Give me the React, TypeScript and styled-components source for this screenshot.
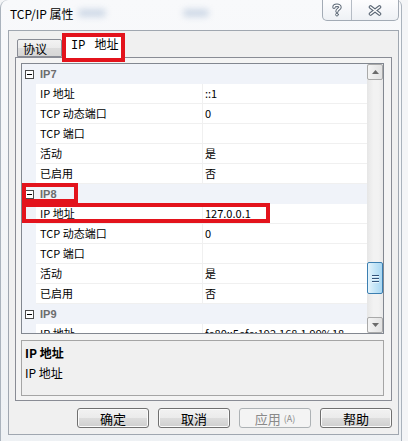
import React from 'react'
import styled, { createGlobalStyle } from 'styled-components'

const GlobalStyle = createGlobalStyle`
  html, body {
    margin: 0;
    padding: 0;
    background: #f4f5f7;
    overflow: hidden;
  }
  body {
    font-family: "Noto Sans CJK SC", "Liberation Sans", sans-serif;
    font-size: 12px;
    color: #000000;
  }
`

const CJK = `"Noto Sans CJK SC", "Liberation Sans", sans-serif`

const Frame = styled.div`
  width: 402px;
  height: 441px;
  box-sizing: border-box;
  display: flex;
  flex-direction: column;
  padding: 0 2px 6px 7px;
  background: linear-gradient(#f8f9fb, #eef1f4);
  border-left: 1px solid #aab3bd;
  border-right: 1px solid #aab3bd;
  border-top-left-radius: 8px;
  border-top-right-radius: 6px;
`

const TitleBar = styled.div`
  height: 30px;
  flex: none;
  display: flex;
  align-items: flex-start;
`

const Title = styled.div`
  padding: 6px 0 0 2px;
  line-height: 16px;
  font-size: 12px;
  font-family: ${CJK};
`

const Blur = styled.span<{ $gap: number; $w: number }>`
  margin: 9px 0 0 ${(p) => p.$gap}px;
  width: ${(p) => p.$w}px;
  height: 8px;
  border-radius: 4px;
  background: #9db3cf;
  opacity: 0.45;
  filter: blur(3px);
`

const Caption = styled.div`
  margin-left: auto;
  display: flex;
  height: 20px;
  border: 1px solid #a3abb5;
  border-top: none;
  border-radius: 0 0 5px 5px;
  background: linear-gradient(#fdfdfe, #eef1f5);
  overflow: hidden;
`

const CaptionBtn = styled.div<{ $w: number }>`
  width: ${(p) => p.$w}px;
  display: flex;
  align-items: center;
  justify-content: center;
  & + & {
    border-left: 1px solid #b5bcc5;
  }
`

const Client = styled.div`
  flex: 1;
  display: flex;
  flex-direction: column;
  width: 391px;
  box-sizing: border-box;
  padding: 4px 6px 5px 6px;
  background: #f0f0f0;
  border: 1px solid #a0a7b0;
`

const TabRow = styled.div`
  height: 22px;
  display: flex;
  align-items: flex-end;
  padding-left: 2px;
`

const Tab = styled.div<{ $active?: boolean; $w: number }>`
  position: relative;
  box-sizing: border-box;
  width: ${(p) => p.$w}px;
  height: ${(p) => (p.$active ? 23 : 18)}px;
  margin-bottom: ${(p) => (p.$active ? -1 : 0)}px;
  z-index: ${(p) => (p.$active ? 1 : 0)};
  padding-left: ${(p) => (p.$active ? 8 : 5)}px;
  border: 1px solid #898c95;
  border-bottom: ${(p) => (p.$active ? 'none' : '1px solid #898c95')};
  border-radius: 2px 2px 0 0;
  background: ${(p) =>
    p.$active ? '#ffffff' : 'linear-gradient(#f3f3f3, #ebebeb 50%, #dddddd 51%, #d6d6d6)'};
  font-size: 12px;
  line-height: ${(p) => (p.$active ? 20 : 17)}px;
  font-family: ${(p) => (p.$active ? `"Liberation Mono", ${CJK}` : CJK)};
  word-spacing: ${(p) => (p.$active ? 2 : 0)}px;
`

const Mark = styled.div<{ $t: number; $l: number; $w: number; $h: number }>`
  position: absolute;
  top: ${(p) => p.$t}px;
  left: ${(p) => p.$l}px;
  width: ${(p) => p.$w}px;
  height: ${(p) => p.$h}px;
  box-sizing: border-box;
  border: 4px solid #e3131c;
  pointer-events: none;
  z-index: 3;
`

const TabPage = styled.div`
  height: 344px;
  box-sizing: border-box;
  display: flex;
  flex-direction: column;
  padding: 5px 7px 4px 5px;
  border: 1px solid #898c95;
  background: #f4f4f4;
`

const Grid = styled.div`
  height: 271px;
  flex: none;
  box-sizing: border-box;
  display: flex;
  border: 1px solid #828790;
  background: #ffffff;
`

const Rows = styled.div`
  flex: 1;
  overflow: hidden;
`

const CatRow = styled.div`
  position: relative;
  height: 20px;
  display: flex;
  align-items: center;
  padding-left: 3px;
  background: #f0f3f9;
`

const Minus = styled.span`
  position: relative;
  width: 9px;
  height: 9px;
  box-sizing: border-box;
  border: 1px solid #4b4b4b;
  background: #ffffff;
  &::after {
    content: '';
    position: absolute;
    left: 1px;
    right: 1px;
    top: 3px;
    height: 1px;
    background: #000000;
  }
`

const CatLabel = styled.span`
  margin-left: 6px;
  font-family: "Liberation Sans", sans-serif;
  font-weight: bold;
  font-size: 11px;
  color: #6d6d6d;
`

const PropRow = styled.div`
  position: relative;
  height: 20px;
  display: flex;
`

const Gutter = styled.div`
  width: 14px;
  flex: none;
  background: #f0f3f9;
`

const Cell = styled.div<{ $w?: number }>`
  ${(p) => (p.$w ? `width: ${p.$w}px; flex: none;` : 'flex: 1;')}
  box-sizing: border-box;
  padding-left: ${(p) => (p.$w ? 4 : 2)}px;
  border-bottom: 1px solid #f0f0f0;
  border-right: ${(p) => (p.$w ? '1px solid #f0f0f0' : 'none')};
  font-family: ${CJK};
  font-size: 11px;
  line-height: 19px;
  white-space: nowrap;
  overflow: hidden;
`

const Scrollbar = styled.div`
  width: 16px;
  flex: none;
  display: flex;
  flex-direction: column;
  background: linear-gradient(to right, #e6e6e6, #f2f2f2 40%, #f2f2f2 70%, #e9e9e9);
`

const ArrowBtn = styled.div`
  height: 16px;
  flex: none;
  box-sizing: border-box;
  display: flex;
  align-items: center;
  justify-content: center;
  border: 1px solid #a9a9a9;
  border-radius: 2px;
  background: linear-gradient(to right, #f4f4f4, #e2e2e2);
`

const Track = styled.div`
  flex: 1;
  display: flex;
  flex-direction: column;
`

const Thumb = styled.div<{ $top: number }>`
  margin-top: ${(p) => p.$top}px;
  height: 32px;
  box-sizing: border-box;
  display: flex;
  flex-direction: column;
  align-items: center;
  justify-content: center;
  gap: 2px;
  border: 1px solid #3c7fb1;
  border-radius: 2px;
  background: linear-gradient(to right, #e5f4fc, #c4e5f7 50%, #a9d7f2);
  span {
    width: 7px;
    height: 1px;
    background: #35547a;
    box-shadow: 0 1px 0 #e8f5fd;
  }
`

const Desc = styled.div`
  margin-top: 6px;
  height: 56px;
  box-sizing: border-box;
  padding: 4px 0 0 3px;
  border: 1px solid #a5a5a5;
  background: #f0f0f0;
  font-family: ${CJK};
  font-size: 12px;
  line-height: 16px;
`

const DescTitle = styled.div`
  font-weight: bold;
`

const DescText = styled.div`
  margin-top: 4px;
`

const ButtonRow = styled.div`
  margin-top: 7px;
  display: flex;
  justify-content: flex-end;
  gap: 9px;
`

const Button = styled.div<{ $disabled?: boolean }>`
  width: 72px;
  height: 20px;
  box-sizing: border-box;
  display: flex;
  align-items: center;
  justify-content: center;
  border: 1px solid ${(p) => (p.$disabled ? '#adb2b5' : '#707070')};
  border-radius: 3px;
  background: ${(p) =>
    p.$disabled ? '#f4f4f4' : 'linear-gradient(#f2f2f2, #ebebeb 50%, #dddddd 51%, #cfcfcf)'};
  box-shadow: inset 0 0 0 1px ${(p) => (p.$disabled ? '#f4f4f4' : '#fbfbfb')};
  color: ${(p) => (p.$disabled ? '#8a8a8a' : '#000000')};
  font-family: ${CJK};
  font-size: 13px;
  small {
    margin-left: 3px;
    font-size: 9px;
  }
`

type Prop = { name: string; value: string; mark?: boolean }
type Group = { name: string; mark?: boolean; props: Prop[] }

const groups: Group[] = [
  {
    name: 'IP7',
    props: [
      { name: 'IP 地址', value: '::1' },
      { name: 'TCP 动态端口', value: '0' },
      { name: 'TCP 端口', value: '' },
      { name: '活动', value: '是' },
      { name: '已启用', value: '否' },
    ],
  },
  {
    name: 'IP8',
    mark: true,
    props: [
      { name: 'IP 地址', value: '127.0.0.1', mark: true },
      { name: 'TCP 动态端口', value: '0' },
      { name: 'TCP 端口', value: '' },
      { name: '活动', value: '是' },
      { name: '已启用', value: '否' },
    ],
  },
  {
    name: 'IP9',
    props: [{ name: 'IP 地址', value: 'fe80::5efe:192.168.1.99%18' }],
  },
]

const HelpGlyph = () => (
  <svg width="10" height="14" viewBox="0 0 10 14">
    <g fill="none" strokeLinecap="round" strokeLinejoin="round">
      <path d="M2 4.2 C2 1.8 8 1.5 8 4.2 C8 6 5 6.2 5 8.3" stroke="#5d6977" strokeWidth="3.4" />
      <path d="M2 4.2 C2 1.8 8 1.5 8 4.2 C8 6 5 6.2 5 8.3" stroke="#ffffff" strokeWidth="1.4" />
      <circle cx="5" cy="11.6" r="1.4" fill="#ffffff" stroke="#5d6977" strokeWidth="1" />
    </g>
  </svg>
)

const CloseGlyph = () => (
  <svg width="14" height="11" viewBox="0 0 14 11">
    <g fill="none" strokeLinecap="round">
      <path d="M2.5 2 L11.5 9 M11.5 2 L2.5 9" stroke="#5d6977" strokeWidth="3.6" />
      <path d="M2.5 2 L11.5 9 M11.5 2 L2.5 9" stroke="#ffffff" strokeWidth="1.5" />
    </g>
  </svg>
)

const Arrow = ({ up }: { up?: boolean }) => (
  <svg width="7" height="4" viewBox="0 0 7 4">
    <path d={up ? 'M0 4 L3.5 0 L7 4 Z' : 'M0 0 L7 0 L3.5 4 Z'} fill="#6b6b6b" />
  </svg>
)

const App: React.FC = () => {
  return (
    <>
      <GlobalStyle />
      <Frame>
        <TitleBar>
          <Title>TCP/IP 属性</Title>
          <Blur $gap={4} $w={28} />
          <Blur $gap={77} $w={26} />
          <Caption>
            <CaptionBtn $w={28}>
              <HelpGlyph />
            </CaptionBtn>
            <CaptionBtn $w={46}>
              <CloseGlyph />
            </CaptionBtn>
          </Caption>
        </TitleBar>
        <Client>
          <TabRow>
            <Tab $w={45}>协议</Tab>
            <Tab $w={62} $active>
              IP 地址
              <Mark $t={-3} $l={-1} $w={63} $h={29} />
            </Tab>
          </TabRow>
          <TabPage>
            <Grid>
              <Rows>
                {groups.map((g) => (
                  <React.Fragment key={g.name}>
                    <CatRow>
                      <Minus />
                      <CatLabel>{g.name}</CatLabel>
                      {g.mark && <Mark $t={-1} $l={0} $w={56} $h={20} />}
                    </CatRow>
                    {g.props.map((p) => (
                      <PropRow key={g.name + p.name}>
                        <Gutter />
                        <Cell $w={167}>{p.name}</Cell>
                        <Cell>{p.value}</Cell>
                        {p.mark && <Mark $t={-1} $l={0} $w={248} $h={20} />}
                      </PropRow>
                    ))}
                  </React.Fragment>
                ))}
              </Rows>
              <Scrollbar>
                <ArrowBtn>
                  <Arrow up />
                </ArrowBtn>
                <Track>
                  <Thumb $top={182}>
                    <span />
                    <span />
                    <span />
                  </Thumb>
                </Track>
                <ArrowBtn>
                  <Arrow />
                </ArrowBtn>
              </Scrollbar>
            </Grid>
            <Desc>
              <DescTitle>IP 地址</DescTitle>
              <DescText>IP 地址</DescText>
            </Desc>
          </TabPage>
          <ButtonRow>
            <Button>确定</Button>
            <Button>取消</Button>
            <Button $disabled>
              应用<small>(A)</small>
            </Button>
            <Button>帮助</Button>
          </ButtonRow>
        </Client>
      </Frame>
    </>
  )
}

export default App
